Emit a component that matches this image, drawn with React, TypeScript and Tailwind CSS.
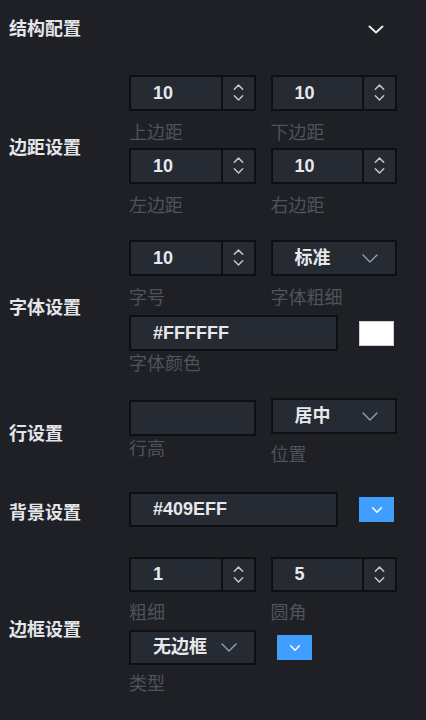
import React from 'react';

const font = "font-['Liberation_Sans','Noto_Sans_CJK_SC',sans-serif]";

function Spin() {
  return (
    <svg width="13" height="24" viewBox="0 0 14 24" fill="none" stroke="#c3c6cc" strokeWidth="1.6" strokeLinecap="round" strokeLinejoin="round">
      <path d="M2.5 8 L7 3.5 L11.5 8" />
      <path d="M2.5 15 L7 19.5 L11.5 15" />
    </svg>
  );
}

function Chevron({ color = '#9a9ea6', w = 16, sw = 1.4 }: { color?: string; w?: number; sw?: number }) {
  return (
    <svg width={w} height={w / 2 + 1} viewBox="0 0 16 9" fill="none" stroke={color} strokeWidth={sw} strokeLinecap="round" strokeLinejoin="round">
      <path d="M1 1 L8 8 L15 1" />
    </svg>
  );
}

function NumInput({ value, h = 'h-[36px]' }: { value: string; h?: string }) {
  return (
    <div className={`flex ${h} border-2 border-[#0e0f12] bg-[#262a32]`}>
      <div className="flex flex-1 items-center pl-[22px] text-[18px] font-bold text-[#e6e8eb]">{value}</div>
      <div className="flex w-[33px] items-center justify-center border-l-2 border-[#0e0f12]">
        <Spin />
      </div>
    </div>
  );
}

function Select({ value, h = 'h-[36px]' }: { value: string; h?: string }) {
  return (
    <div className={`flex ${h} items-center justify-between border-2 border-[#0e0f12] bg-[#262a32] pl-[22px] pr-[17px]`}>
      <span className="text-[18px] font-bold text-[#e6e8eb]">{value}</span>
      <Chevron />
    </div>
  );
}

function Hint({ children, mt }: { children: React.ReactNode; mt: string }) {
  return <div className={`${mt} text-[18px] leading-[20px] text-[#4f535a]`}>{children}</div>;
}

function Section({ label, pt, children, mt }: { label: string; pt: string; children: React.ReactNode; mt: string }) {
  return (
    <div className={`flex ${mt}`}>
      <div className={`flex w-[129px] items-center pl-[9px] ${pt} text-[18px] font-bold text-[#e3e5e8]`}>{label}</div>
      <div className="w-[268px]">{children}</div>
    </div>
  );
}

function BlueSwatch() {
  return (
    <div className="flex h-[25px] w-[35px] items-center justify-center bg-[#409eff]">
      <Chevron color="#ffffff" w={10} sw={2.4} />
    </div>
  );
}

export default function App() {
  return (
    <div className={`h-[720px] w-[426px] overflow-hidden bg-[#1e2026] ${font}`}>
      <div className="flex h-[58px] items-center justify-between pl-[9px] pr-[42px]">
        <span className="text-[18px] font-bold text-[#e3e5e8]">结构配置</span>
        <svg width="16" height="9" viewBox="0 0 16 9" fill="none" stroke="#e6e8eb" strokeWidth="2" strokeLinecap="round" strokeLinejoin="round">
          <path d="M1.5 1.5 L8 7.5 L14.5 1.5" />
        </svg>
      </div>

      <Section label="边距设置" pt="pt-[6px]" mt="mt-[17px]">
        <div className="grid grid-cols-2 gap-x-[15px] gap-y-[5px]">
          <div>
            <NumInput value="10" />
            <Hint mt="mt-3">上边距</Hint>
          </div>
          <div>
            <NumInput value="10" />
            <Hint mt="mt-3">下边距</Hint>
          </div>
          <div>
            <NumInput value="10" />
            <Hint mt="mt-3">左边距</Hint>
          </div>
          <div>
            <NumInput value="10" />
            <Hint mt="mt-3">右边距</Hint>
          </div>
        </div>
      </Section>

      <Section label="字体设置" pt="pt-[2px]" mt="mt-[24px]">
        <div className="grid grid-cols-2 gap-x-[15px]">
          <div>
            <NumInput value="10" />
            <Hint mt="mt-3">字号</Hint>
          </div>
          <div>
            <Select value="标准" />
            <Hint mt="mt-3">字体粗细</Hint>
          </div>
        </div>
        <div className="mt-[7px] flex items-center gap-[21px]">
          <div className="flex h-[36px] w-[209px] items-center border-2 border-[#0e0f12] bg-[#262a32] pl-[22px] text-[18px] font-bold text-[#e6e8eb]">
            #FFFFFF
          </div>
          <div className="h-[25px] w-[35px] border border-[#d0d0d0] bg-white" />
        </div>
        <Hint mt="mt-[3px]">字体颜色</Hint>
      </Section>

      <Section label="行设置" pt="pt-[6px]" mt="mt-[24px]">
        <div className="grid grid-cols-2 gap-x-[15px]">
          <div className="pt-[2px]">
            <div className="h-[36px] border-2 border-[#0e0f12] bg-[#262a32]" />
            <Hint mt="mt-[3px]">行高</Hint>
          </div>
          <div>
            <Select value="居中" />
            <Hint mt="mt-[11px]">位置</Hint>
          </div>
        </div>
      </Section>

      <Section label="背景设置" pt="pt-[7px]" mt="mt-[27px]">
        <div className="flex items-center gap-[21px]">
          <div className="flex h-[35px] w-[209px] items-center border-2 border-[#0e0f12] bg-[#262a32] pl-[22px] text-[18px] font-bold text-[#e6e8eb]">
            #409EFF
          </div>
          <BlueSwatch />
        </div>
      </Section>

      <Section label="边框设置" pt="pt-[10px]" mt="mt-[30px]">
        <div className="grid grid-cols-2 gap-x-[15px]">
          <div>
            <NumInput value="1" h="h-[35px]" />
            <Hint mt="mt-[11px]">粗细</Hint>
          </div>
          <div>
            <NumInput value="5" h="h-[35px]" />
            <Hint mt="mt-[11px]">圆角</Hint>
          </div>
        </div>
        <div className="mt-[7px] flex items-center gap-[21px]">
          <div className="w-[127px]">
            <Select value="无边框" h="h-[35px]" />
          </div>
          <BlueSwatch />
        </div>
        <Hint mt="mt-[9px]">类型</Hint>
      </Section>
    </div>
  );
}
